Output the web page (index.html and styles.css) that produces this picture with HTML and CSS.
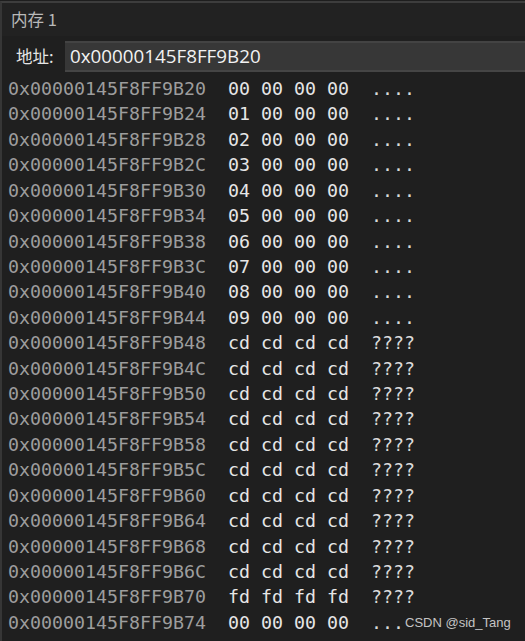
FILE: index.html
```html
<!DOCTYPE html>
<html>
<head>
<meta charset="utf-8">
<link rel="stylesheet" href="styles.css">
</head>
<body>
<div class="win">
  <div class="title">内存 1</div>
  <div class="addrbar">
    <span class="label">地址:</span>
    <div class="input">0x00000145F8FF9B20</div>
  </div>
  <div class="dump">
    <div class="row"><span class="a">0x00000145F8FF9B20</span>  <span class="b">00 00 00 00</span>  <span class="c">....</span></div>
    <div class="row"><span class="a">0x00000145F8FF9B24</span>  <span class="b">01 00 00 00</span>  <span class="c">....</span></div>
    <div class="row"><span class="a">0x00000145F8FF9B28</span>  <span class="b">02 00 00 00</span>  <span class="c">....</span></div>
    <div class="row"><span class="a">0x00000145F8FF9B2C</span>  <span class="b">03 00 00 00</span>  <span class="c">....</span></div>
    <div class="row"><span class="a">0x00000145F8FF9B30</span>  <span class="b">04 00 00 00</span>  <span class="c">....</span></div>
    <div class="row"><span class="a">0x00000145F8FF9B34</span>  <span class="b">05 00 00 00</span>  <span class="c">....</span></div>
    <div class="row"><span class="a">0x00000145F8FF9B38</span>  <span class="b">06 00 00 00</span>  <span class="c">....</span></div>
    <div class="row"><span class="a">0x00000145F8FF9B3C</span>  <span class="b">07 00 00 00</span>  <span class="c">....</span></div>
    <div class="row"><span class="a">0x00000145F8FF9B40</span>  <span class="b">08 00 00 00</span>  <span class="c">....</span></div>
    <div class="row"><span class="a">0x00000145F8FF9B44</span>  <span class="b">09 00 00 00</span>  <span class="c">....</span></div>
    <div class="row"><span class="a">0x00000145F8FF9B48</span>  <span class="b">cd cd cd cd</span>  <span class="c">????</span></div>
    <div class="row"><span class="a">0x00000145F8FF9B4C</span>  <span class="b">cd cd cd cd</span>  <span class="c">????</span></div>
    <div class="row"><span class="a">0x00000145F8FF9B50</span>  <span class="b">cd cd cd cd</span>  <span class="c">????</span></div>
    <div class="row"><span class="a">0x00000145F8FF9B54</span>  <span class="b">cd cd cd cd</span>  <span class="c">????</span></div>
    <div class="row"><span class="a">0x00000145F8FF9B58</span>  <span class="b">cd cd cd cd</span>  <span class="c">????</span></div>
    <div class="row"><span class="a">0x00000145F8FF9B5C</span>  <span class="b">cd cd cd cd</span>  <span class="c">????</span></div>
    <div class="row"><span class="a">0x00000145F8FF9B60</span>  <span class="b">cd cd cd cd</span>  <span class="c">????</span></div>
    <div class="row"><span class="a">0x00000145F8FF9B64</span>  <span class="b">cd cd cd cd</span>  <span class="c">????</span></div>
    <div class="row"><span class="a">0x00000145F8FF9B68</span>  <span class="b">cd cd cd cd</span>  <span class="c">????</span></div>
    <div class="row"><span class="a">0x00000145F8FF9B6C</span>  <span class="b">cd cd cd cd</span>  <span class="c">????</span></div>
    <div class="row"><span class="a">0x00000145F8FF9B70</span>  <span class="b">fd fd fd fd</span>  <span class="c">????</span></div>
    <div class="row"><span class="a">0x00000145F8FF9B74</span>  <span class="b">00 00 00 00</span>  <span class="c">....</span></div>
  </div>
  <div class="watermark">CSDN @sid_Tang</div>
</div>
</body>
</html>
```
FILE: styles.css
```css
html, body {
  margin: 0;
  padding: 0;
  background: #1e1e1e;
  width: 525px;
  height: 641px;
  overflow: hidden;
}
.win {
  position: relative;
  height: 641px;
  box-sizing: border-box;
  margin-top: 1px;
  border-top: 2px solid #3d3d3d;
  border-left: 2px solid #363636;
  background: #1f1f1f;
}
.title {
  height: 33px;
  padding-left: 9px;
  font-family: "Noto Sans CJK SC", "Noto Sans", sans-serif;
  font-size: 16.5px;
  line-height: 32px;
  color: #b9b9b9;
  background: #222222;
}
.addrbar {
  display: flex;
  align-items: flex-start;
  height: 38px;
  margin-top: 5px;
}
.label {
  flex: none;
  width: 63px;
  padding-left: 14px;
  box-sizing: border-box;
  font-family: "Noto Sans CJK SC", "Noto Sans", sans-serif;
  font-size: 16.5px;
  color: #e6e6e6;
  line-height: 31px;
}
.input {
  flex: 1;
  height: 31px;
  box-sizing: border-box;
  border-top: 2px solid #434343;
  border-bottom: 2px solid #454545;
  background: #373737;
  padding-left: 5px;
  font-family: "Open Sans", "Noto Sans", sans-serif;
  font-size: 18.8px;
  line-height: 27px;
  color: #f2f2f2;
}
.dump {
  padding-left: 6px;
  margin-top: -3px;
  font-family: "DejaVu Sans Mono", "Liberation Mono", monospace;
  font-size: 18.27px;
  line-height: 25.43px;
}
.row { height: 25.43px; white-space: pre; }
.a { color: #9d9d9d; }
.b { color: #e6e6e6; }
.c { color: #dadada; }
.watermark {
  position: absolute;
  left: 401px;
  top: 612px;
  font-family: "Liberation Sans", "Noto Sans", sans-serif;
  font-size: 13px;
  color: #c4c4c4;
  background: #1f1f1f;
  padding: 0 2px;
}
```
